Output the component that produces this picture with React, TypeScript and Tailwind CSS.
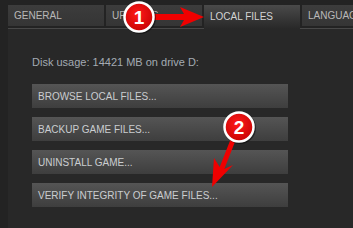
import React from 'react';

const tabs = ['GENERAL', 'UPDATES', 'LOCAL FILES', 'LANGUAGE'];
const actions = [
  'BROWSE LOCAL FILES...',
  'BACKUP GAME FILES...',
  'UNINSTALL GAME...',
  'VERIFY INTEGRITY OF GAME FILES...',
];

function Callout({ cx, cy, n }: { cx: number; cy: number; n: string }) {
  return (
    <g>
      <circle cx={cx + 1} cy={cy + 1} r={16} fill="rgba(0,0,0,0.45)" />
      <circle cx={cx} cy={cy} r={14.5} fill="url(#redg)" stroke="#ffffff" strokeWidth={2.5} />
      <text
        x={cx}
        y={cy + 6.5}
        textAnchor="middle"
        fontFamily="Liberation Sans, Arial, sans-serif"
        fontWeight="bold"
        fontSize={19}
        fill="#ffffff"
      >
        {n}
      </text>
    </g>
  );
}

export default function App() {
  return (
    <div className="relative w-[353px] h-[228px] overflow-hidden bg-[#232323] font-['Liberation_Sans',Arial,sans-serif] flex flex-col">
      <div className="flex gap-[2px] pl-[8px] pt-[5px] h-[28px] items-start">
        {tabs.map((t) =>
          t === 'LOCAL FILES' ? (
            <div
              key={t}
              className="relative z-10 w-[96px] h-[24px] shrink-0 flex items-center pl-[6px] pb-[1px] text-[10px] text-[#d4d4d4] bg-gradient-to-b from-[#4a4a4a] to-[#282828]"
            >
              {t}
            </div>
          ) : (
            <div
              key={t}
              className="w-[96px] h-[21px] shrink-0 flex items-center pl-[6px] text-[10px] text-[#b8b8b8] bg-gradient-to-b from-[#3c3c3c] to-[#353535]"
            >
              {t}
            </div>
          )
        )}
      </div>
      <div className="flex-1 ml-[8px] bg-[#282828] border-t border-[#484848] pt-[27px] pl-[24px]">
        <div className="text-[11px] leading-[13px] text-[#a4abb3]">Disk usage: 14421 MB on drive D:</div>
        <div className="mt-[15px] flex flex-col gap-[9px]">
          {actions.map((a) => (
            <div
              key={a}
              className="w-[256px] h-[24px] flex items-center pl-[6px] text-[10px] text-[#cacdd0] bg-gradient-to-b from-[#555555] to-[#3e3e3e]"
            >
              {a}
            </div>
          ))}
        </div>
      </div>

      <svg className="absolute inset-0 pointer-events-none" width={353} height={228} viewBox="0 0 353 228">
        <defs>
          <radialGradient id="redg" cx="0.45" cy="0.4" r="0.7">
            <stop offset="0" stopColor="#ff1a1a" />
            <stop offset="1" stopColor="#c00000" />
          </radialGradient>
        </defs>
        <polygon points="152,14 184,14 180,7 204,17 180,27 184,20 152,20" fill="#f00000" />
        <Callout cx={139} cy={17} n="1" />
        <polygon
          points="230.7,139 235.3,141 224.3,169 233,165 212,187 214,158 219.7,167"
          fill="#f00000"
        />
        <Callout cx={239} cy={127} n="2" />
      </svg>
    </div>
  );
}
